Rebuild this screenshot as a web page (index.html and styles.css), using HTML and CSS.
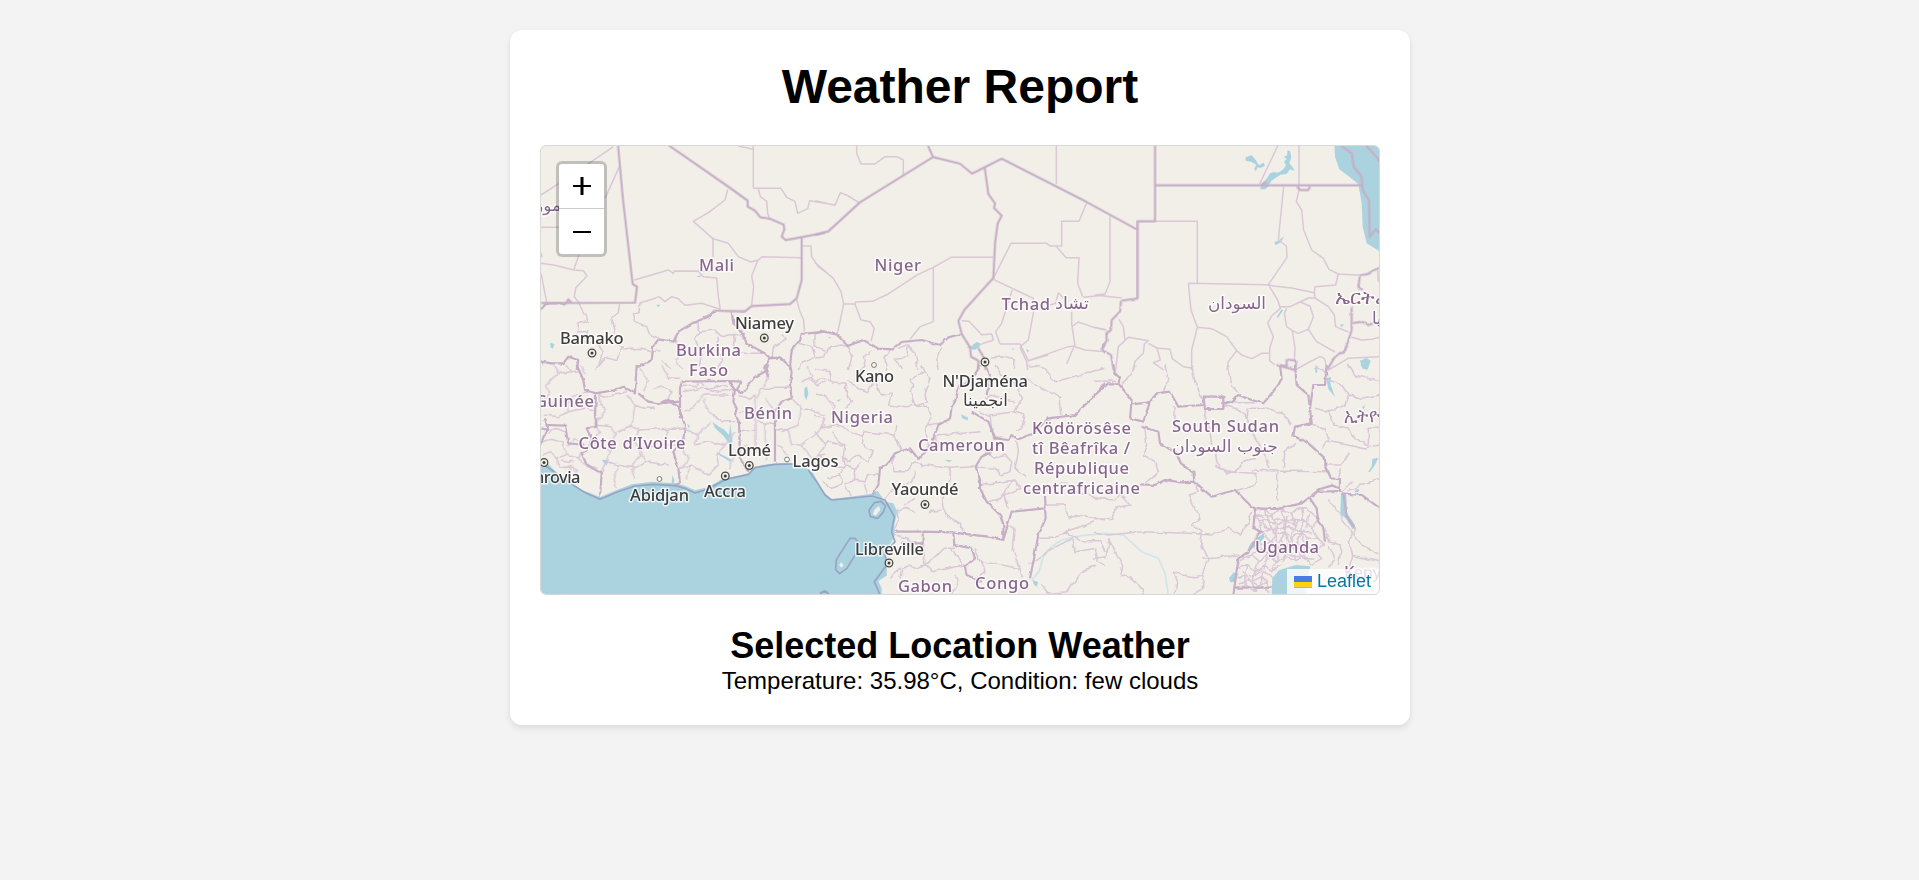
FILE: index.html
```html
<!DOCTYPE html>
<html lang="en">
<head>
<meta charset="utf-8">
<title>Weather Report</title>
<link rel="stylesheet" href="styles.css">
</head>
<body>
<main class="card">
  <h1 class="title">Weather Report</h1>
  <div class="map">
    <svg class="map-canvas" viewBox="541 146 838 448" width="838" height="448">
      <defs>
        <filter id="wiggle" x="0" y="0" width="100%" height="100%">
          <feTurbulence type="fractalNoise" baseFrequency="0.11" numOctaves="2" seed="4"/>
          <feDisplacementMap in="SourceGraphic" scale="5" xChannelSelector="R" yChannelSelector="G"/>
        </filter>
        <filter id="rough" x="0" y="0" width="100%" height="100%">
          <feTurbulence type="fractalNoise" baseFrequency="0.16" numOctaves="2" seed="9"/>
          <feDisplacementMap in="SourceGraphic" scale="3" xChannelSelector="R" yChannelSelector="G"/>
        </filter>
      </defs>
      <!-- sea and lakes -->
      <g class="water">
        <path transform="translate(535 365) scale(.33333)" d="M15 286L35 292 60 318 95 345 140 374 195 396 245 375 290 358 350 350 420 355 450 362 480 376 520 366 560 343 610 332 640 325 660 305 700 297 760 293 790 300 820 312 835 325 845 345 870 385 888 402 940 396 1010 386 1028 378 1040 395 1050 410 1075 415 1087 440 1078 480 1080 510 1062 545 1050 575 1056 600 1055 632 1030 648 1040 670 1040 700H15Z"/>
        <path transform="translate(1095 140) scale(.33333)" d="M718 10L720 50 733 88 760 108 790 132 800 190 803 260 815 310 855 335V10Z"/>
        <g transform="translate(1095 140) scale(.33333)">
          <path d="M452 52l18-6 12 14 10 16 14-8 4 10-14 6-8-2-6 12-4-8 6-12-14-8-18-4z"/>
          <path d="M495 148l6-18 14-14 10-16 12-4 10 2 10-4 8-6 8-12-6-10 8-8-8-8 10-4 0-14 8 0 4 18-6 20 10 12 6 10-14-4-10 14-18 2-12 8-16 10-10 18-8 8z"/>
          <path d="M538 306l12-4 18-14-10 18-16 10zM795 662l20-8 12 8-8 24h-16zM545 530l15-22 4 4-16 22zM738 520l-6 20zM736 552l12 2-10 8zM656 686l8-6 4 8z"/>
        </g>
        <g transform="translate(815 140) scale(.33333)"><path d="M454 622l16-4 14-12 12 4-4 14-16 6-8-4zM634 626l8 6-4 6zM590 626l8-2-4 6zM40 590l8 2-4 4z"/></g>
        <g transform="translate(535 140) scale(.33333)"><path d="M46 608l12 4-4 14-8-4zM364 494h12l-6 8zM484 410l14-4-2 6z"/></g>
        <g transform="translate(535 365) scale(.33333)"><path d="M532 170l18 14 18 10 14 16 4-34 6 50-1 24-12-18-14-20-18-16-8-8zM546 262l24 12 20 10-4 6-38-22zM808 70l8-6 4 22-6 20-6-14zM200 284l22 2-8 16zM456 176l8 6-2 10zM412 330l6 14-2 16-6-4z"/></g>
        <g transform="translate(815 365) scale(.33333)"><path d="M438 148l22 10-2 8-16-6zM64 106l14-4-6 8zM328 64l6 16-4 4zM388 284l24 2-10 6zM316 292l10 10-6 6zM730 94l12 2-6 4zM652 644l18 8-6 14-8-10z"/></g>
        <g transform="translate(1095 365) scale(.33333)"><path d="M738 384h16l2 60 24 36-6 14-22-34-16-14zM456 558l10-22 40-32 2 14-24 26-22 12zM402 640l14-18 14 4-10 24-14 2zM530 690l2-50 20-24 50-16 44 4-12 44v50zM784 372l10 2-4 8h-12zM820 320l10-16 2-22 18-4-10 22-16 22zM660 8l8 10-6 8zM694 40l14-4-2 20 14 40-20-24zM796-4h26l-6 20-14-8zM802 126l8-6-4 14z"/></g>
      </g>
      <g class="river">
        <path transform="translate(815 365) scale(.33333)" d="M650 645L672 620 685 575 710 545 740 525 800 512 870 505 925 510 980 560 1030 580 1050 625 1060 688"/>
      </g>

      <!-- regional borders, desert north -->
      <g class="region">
        <path transform="translate(535 140) scale(.33333)" d="M18 165L72 130 140 85 235 20M252 82L210 175M18 262H72M132 345L116 390 60 376 18 370M116 390L145 392 156 408 122 444 118 470 132 488M18 400L36 490M18 340L22 352M655 18V145M610 18L655 28M655 145H738L755 172 780 184 788 220 818 206 824 182 870 190M670 147L676 170 695 184 698 220 705 240M578 148L570 180 520 218 475 244 534 296 580 310 610 350 648 366 670 360 682 350 798 353M534 296V352M298 420L400 390 415 400 418 393 530 394M490 394L505 410 545 414 550 470 556 508M668 362L650 408 656 440 650 495M315 488L345 480 372 470 390 485 410 470 430 476 450 496 500 490 556 508M802 318H828L830 350 850 380 870 395M785 480L795 515 806 540 808 575"/>
        <path transform="translate(815 140) scale(.33333)" d="M125 18V40L138 72 180 72 210 50H245L265 60V106M0 182L60 196 76 158 100 168 132 188M724 18V133M815 188L792 244H740V318L705 318 695 310H588L535 415M725 320L753 353H792L788 430 803 470M535 352H408L355 382 308 404 220 462 172 484 122 486 120 492H86L78 455 55 415 0 368M355 382V545L315 560 285 598M86 492L72 560 66 582M120 492L138 540 165 545 178 566 168 604M535 418L655 475 656 515 640 600 615 620M592 450L585 470 560 550 542 575 555 612M440 542L462 544 500 584 530 582 535 600 505 610 490 616M556 612H615L640 662 760 620 780 618 770 550V515M770 560L790 546 830 560 870 570M705 495L722 490 730 458 752 480M805 472L870 465M615 622L635 665 638 690M780 620L810 630 870 635M640 662L700 645M755 672L776 622"/>
        <path transform="translate(1095 140) scale(.33333)" d="M45 228V425L30 462 0 465 80 474M182 244H307V428M280 430L520 434 576 352 574 318 550 300 566 140M280 430L288 510 307 562 290 630V690M307 562L350 566 395 590 425 632 400 665 396 690M425 632L440 645 470 656 500 640 522 640M548 18L494 132M612 18V134M604 140L612 150 604 185 620 210 626 270 650 330 685 355 702 388 730 402 795 406M730 402L722 435 660 440 658 458 590 444 535 438 520 434 548 480 556 505 530 528 518 550 535 590 524 625V662L540 675M556 500L585 500 615 486 640 474 660 474 658 458M615 486L645 498 655 530 640 568 610 580 592 572 575 560 568 520 575 505M640 568L665 605 720 636M660 474L700 500 718 525 722 560 760 576M592 572L600 625 598 660M795 450L790 432M0 562L35 570M72 538L85 560 90 600M62 690L70 620 100 592 160 602 148 612 145 640 120 664 114 690M160 610L186 624 196 660 175 668 206 690M186 624L225 628 232 656 265 680 290 684M770 592L800 600 830 598 855 592M600 690L640 668 675 650 688 655 696 685M700 690L760 655 855 650M848 388L850 425"/>
      </g>

      <!-- regional borders, dense south -->
      <g class="region" filter="url(#wiggle)">
        <path transform="translate(535 140) scale(.33333)" d="M130 490L148 520 160 545 130 550 128 575 155 575 145 600 190 610 205 640 186 690M255 492L248 520 230 535 240 570 235 600 262 625 248 660 215 650 190 680M315 488L312 515 292 525 300 545 335 560 345 585 375 600M265 630L310 625 350 635 375 632M420 600L440 630 425 660 440 690M485 545L495 575 480 600 500 640 490 690M495 575L540 570 560 590 600 580 630 600M550 590L540 620 560 650 550 690M600 580L595 620 620 640 690 640M380 660L410 690M740 580L750 600 715 620 712 650M790 610L830 620 840 650 800 670 790 690M840 580V620L870 630"/>
        <path transform="translate(815 140) scale(.33333)" d="M0 655L30 650 35 625 80 615 98 620M98 620L110 650 100 690M168 628L165 640 145 650 150 680 130 690M250 625L280 615 275 650 240 655 260 690M380 620L368 660 372 690M225 630L210 655 215 690M280 615L300 640 310 690M530 655L560 650 600 660 598 690"/>
        <path transform="translate(535 365) scale(.33333)" d="M55 0L70 25 30 60 45 80 22 110M70 25L130 18M135 0L150 30M95 0L110 20M30 150L70 155 100 140 150 130 180 140M100 140L95 110 130 90 165 80M180 85L215 95 275 80M190 80L195 120 215 130 180 180 230 185 240 205 290 180 310 195 400 190 450 190M275 90L300 120 330 130 360 130M300 120L290 180M310 195L300 230 320 270 290 300 300 340M180 180L190 205 170 230 225 260 215 290 250 300 300 310 330 290 400 300M225 260L240 205M215 290L200 325M330 290L320 250 385 240 420 240M400 190L385 240M250 300L235 340 245 370M315 10L340 50 325 80M380 0L400 40 435 40M355 70L380 60 410 80 400 110M445 80L500 70 560 80 590 70M450 140L470 130 510 90 580 90M510 100L520 140 560 170 600 170M455 190L490 210 530 170M490 210L480 240 520 230 570 240 600 200M445 250L460 280 440 310 470 300 520 330 550 300 545 270 570 240M470 300L450 340M610 260L580 310M440 60L480 65 490 50 520 70 580 60M610 90L640 100 660 90V270M615 140L660 130M615 200L660 195M690 0L700 40 680 70 665 100M680 70H770M690 100L720 140M665 170L720 180M690 170L692 290M610 250L640 240M720 190L760 195 770 240 800 240 840 210 870 180M770 100L800 130 850 140 870 150M800 50L830 40 850 60 870 50M800 130L790 180 740 200M800 240L830 280 870 270M730 240L760 270M820 0L830 40M20 230L50 220 80 230 95 270 60 280 50 260 20 270M95 270L130 280 150 300 190 310M60 280L80 310 110 300 130 340M40 205L60 190 95 200M100 240L120 220 150 240M130 280L140 260M110 300L100 340M75 285L115 290"/>
        <path transform="translate(815 365) scale(.33333)" d="M0 50L30 40 50 50 45 20 0 10M50 50L90 55 95 90 110 110 90 130M100 50L130 70 160 80 175 50 200 90 230 85 220 120 275 125 300 120 285 80 300 60 285 40 330 20 320 0M330 20L345 40 330 90 335 110 300 120 340 125 350 160 330 190 340 240M0 90L30 95 60 120 50 150M0 150L30 160 20 190 60 180 110 200 140 215 150 200 240 210 245 180M140 215L150 250 175 260 160 290 130 270 100 290 85 270 90 240 70 230 50 200M0 200L30 240 40 230 80 240M30 240L10 270 30 290 20 310M85 270L90 300 75 330 80 360 50 370 20 350M90 300L120 310 140 290M120 310L115 345 90 360 105 390M115 345L150 350 160 330 190 330M150 350L160 385M75 330L40 340M60 310H90M240 210L260 260M240 270L230 290 240 320 275 320 300 290 330 300 400 310 480 305M400 310L410 340 380 400 385 430 395 455 440 475V500M300 320L290 350 250 370 225 380 210 400M240 440L280 430 300 440M340 440L380 435M245 430L250 460 240 490M270 420L300 400M370 240L360 210 440 205 500 200M340 180L400 170M480 305L540 310 560 330 585 320 590 290 570 270 540 280 510 260M500 360L600 345 615 370 570 390 580 430M600 345L590 350 560 400 520 410M540 220L530 190 525 150 600 140 630 150 620 190 600 200M525 155L490 140M540 0L560 30 600 50 620 100 600 140M600 50L640 40 660 60 700 80 735 95 740 150M640 0L690 10 720 50 870 10M510 100L530 90 600 110M540 220L560 215M605 225L610 260 600 310 630 340M690 420L750 420 760 460 790 450 870 465M640 380H690L750 350 800 390 870 400M585 480L600 490 595 560 610 600 620 640M670 520L720 520 750 500 840 470M750 500L800 530 860 530 870 560M640 600L700 560 770 520 780 560 840 550 850 590 870 600M840 600L790 630 760 680 700 685 680 660M240 510L280 520 290 560 325 570M325 530L330 600 300 610 280 600 250 610 230 640M330 600L355 580 385 550 420 550M330 600L350 620 450 600M410 550L440 600M260 610L255 640M420 630L430 650 410 690M480 550L500 590 560 600 610 610M500 590L510 620 480 640M240 560L210 570"/>
        <path transform="translate(1095 365) scale(.33333)" d="M0 50L30 45 60 50M80 55L110 30 120 0M210 0L220 50 205 80M290 0L300 50 325 110M400 0L410 60 430 85M240 125V190M330 135L345 200 350 240M380 120L420 130 450 150 470 200 500 250 525 312M455 170L460 130 520 130 570 150 590 180M360 250L365 290 395 325 420 320 440 290 480 280M385 125L400 110 480 110M360 300L400 320 480 325 488 350 470 365 425 375M470 315L545 318 700 320M545 318V410M600 235L570 260 565 310M700 320L700 335M150 190L155 240 145 270 180 290 190 320 150 355M0 400L60 405 70 385 105 420 60 430 50 460 0 465M300 355L310 380 280 390 300 430 315 460 290 480 320 500 315 530 340 580M0 505L40 510 140 500 280 505 350 510 400 490 440 510 470 440M320 580L430 570M0 580L30 575 45 540 40 520 60 560 80 600 75 630 110 640 140 670 150 690M340 580L320 630 330 660 300 690M235 620L260 630 300 635 320 630M235 620L245 650 240 690M660 130L700 140 720 180 760 190M690 40L740 60 760 90 800 100 855 90M760 90L750 120 700 140M650 180L690 190 700 220 680 250M700 230L760 240 800 250 855 240M760 190L780 220 820 240V190L855 190M760 260L740 300 690 300M740 310L730 340M760 380L800 360 855 340M740 380L770 350M700 400L770 500 800 540 855 570M780 490L760 530 770 570 855 590M690 490L700 530 740 540 730 600M770 570L760 610M660 0L700 30M760 0L780 30 855 50M700 540L720 580 700 610"/>
        <!-- fine district mesh -->
        <path transform="translate(1095 365) scale(.33333)" d="M480 440L510 430 530 450 560 430 590 450 620 425 645 440 670 460 650 490 670 520 685 540 660 560 680 580 650 600M490 470L520 465 545 480 570 465 600 480 625 460 650 490M500 500L530 490 540 510 570 500 590 520 620 500 640 520 670 520M480 440L490 470 500 500 480 520 500 540 530 530 550 550 580 535 600 555 630 540 660 560M510 430L520 465 530 490 500 500 530 530 540 510 550 550 570 500 580 535 590 520 600 555 620 500 630 540 640 520M530 450L545 480 540 510M560 430L570 465 570 500M590 450L600 480 590 520M620 425L625 460 620 500M440 580L470 570 490 590 520 570 545 590 570 570 600 590 630 570 650 600M430 610L460 600 480 620 510 600 530 620 560 600M425 640L450 630 470 650 500 635 520 660M420 670L450 660 480 680 500 660 520 680M470 570L500 540M490 590L480 620 470 650 480 680M520 570L530 530M520 570L510 600 500 635 500 660M545 590L550 550M570 570L580 535M600 590L600 555M630 570L630 540M460 600L450 630 450 660M440 580L430 610M545 590L530 620M575 450V490L560 520 575 560 560 590M505 450L500 480M640 450L635 490M610 520L615 570 640 590M480 455L510 450 550 465 590 465 640 470M500 480L540 495 580 485 610 495 650 505M480 550L510 555 530 580 560 560 610 575 660 580M440 620L470 635 500 615 530 640M430 655L460 645 490 665 520 650"/>
      </g>

      <!-- national borders -->
      <g class="nation">
        <path transform="translate(535 140) scale(.33333)" d="M249 15L264 180 293 432 306 440 300 488 18 489M94 488L100 478 110 488M400 15L580 140 638 182V200L660 212 676 232 705 236 746 254 748 268 740 290 752 300 798 292 870 278M800 292V420L785 475 765 492 650 498 630 514 540 512"/>
        <path transform="translate(815 140) scale(.33333)" d="M338 15L354 51 135 187 40 274 0 285M354 51L435 71 471 101 560 56 815 186 965 268M509 82L520 162 540 190 537 204 560 227 548 250 540 310 535 414 448 510 430 543 440 582 465 622 468 650 490 662V690M490 625L505 650 512 690"/>
        <path transform="translate(1095 140) scale(.33333)" d="M180 15V244H128V475M180 136H800M608 140L616 150H640L645 140M740 18L770 40 776 80 800 110 803 150 822 180 824 290 842 268 855 280M812 15L835 40 855 65M500 134L514 126"/>
      </g>
      <g class="nation" filter="url(#rough)">
        <path transform="translate(535 140) scale(.33333)" d="M18 508L35 490H95M540 510L520 530 475 548 430 575 415 605 370 598 355 620 350 660 325 675 305 680M590 515L595 550 620 575 635 610 690 640 705 655 690 680 700 710M705 655L735 652 765 680 770 630 795 600 800 582 870 575M18 665L50 670 85 670 100 650 130 660 125 690"/>
        <path transform="translate(815 140) scale(.33333)" d="M0 580L25 574 66 584 98 618 145 600 190 626 235 628 260 606 320 600 375 615 400 592 438 582M870 610L860 630 870 640"/>
        <path transform="translate(1095 140) scale(.33333)" d="M130 475L78 482 75 515 50 540 48 570 34 580 35 600 20 630 48 645 56 690M855 380L820 402 795 406 790 440 800 450M770 500V570L750 632 720 650 696 690M770 550L800 545 820 555 855 545M545 675L575 678V658L605 662 600 690M600 690L545 675"/>
        <path transform="translate(535 365) scale(.33333)" d="M125 0L145 45 150 75 182 85 240 75 265 65 300 85 305 0M310 85L340 110 370 115 400 105 430 125 450 180 445 225 415 260 430 310 435 355 420 360M370 115L435 110M435 160V70L440 50 580 48 600 75 595 110 605 130 600 150 612 170 615 280 640 320M580 48L620 50M625 80L660 35 690 20 700 0M620 50L605 75 625 85M720 290V140L740 110 770 100 765 60 770 20 765 0M183 85L180 150 185 185 155 190 170 225 155 260 140 265 155 300 200 325 195 395M18 235L40 180 90 182 100 235 150 240M20 190L40 195 30 160"/>
        <path transform="translate(815 365) scale(.33333)" d="M495 0L480 30 430 70 420 110 410 125 405 160 370 180 350 235 310 282 285 250 240 265 215 300 195 310 190 360 172 390M510 0L525 30 515 90M470 140L520 170 540 220 580 225 590 210 605 225 655 205M655 205L700 160 780 150 830 100 870 55M530 260L500 275 482 305 495 345 495 370 515 410 555 450 565 480 565 525 520 515 410 502 320 500 240 500M323 500V535H260M415 502L418 540 470 550 480 580 450 605 455 630 500 650M565 525L590 440 690 430 692 460 670 510 655 590 645 640M692 430L690 390"/>
        <path transform="translate(1095 365) scale(.33333)" d="M55 0L60 25 75 40 70 55 40 55 0 90M70 55L110 105 105 160 145 170 165 110 185 85 225 80 250 125 325 120M110 118L165 112M325 95H385V132H330ZM385 115L410 110 430 90 470 105 505 115 550 60 560 40 555 0M140 185L190 200 195 235 245 265 260 300 295 320 298 350 260 352 210 345 180 360 135 358M298 350L350 395 420 375 470 425 480 430 545 432 620 415 665 380 740 378M600 0L605 60 640 90 645 130 655 60 690 60 695 0M645 130L650 175 600 185 595 212 640 235 690 280 692 310 710 340 735 342V378M665 375L710 362 735 370M740 385L800 390 855 430M645 400L665 430 670 470 685 490 690 530M480 430L475 490 500 500 460 560 430 580 415 690M415 668H530M745 385L755 455 780 490"/>
      </g>
      <!-- maritime limits -->
      <g class="maritime">
        <path transform="translate(535 365) scale(.33333)" d="M18 292L45 312 100 350 145 380 195 403 245 382 300 363 355 358 420 362 450 370 480 384 520 372 570 344 640 328 660 308 720 298 775 297M820 315L845 350 870 390 890 405 940 400 1010 393 1050 405 1078 455 1070 500 1080 530 1050 565 1055 600 1018 650 1035 690M855 685l15-8 10 10"/>
        <path transform="translate(815 365) scale(.33333)" d="M178 413l20-4 14 14-8 20-16 17-22-5-4-20zM105 520h15l8 10-2 30-30 50-22 16-12-12 2-30zM15 690l8-10 14 2 4 8"/>
      </g>
      <path class="islet" transform="translate(815 365) scale(.33333)" d="M178 434l14-12 4 12-14 18-8-4zM72 600l6-8 8 8-6 8z"/>

      <!-- city markers -->
      <g class="capital">
        <circle cx="592" cy="353" r="3.8"/><circle cx="764.300" cy="338" r="3.8"/><circle cx="985" cy="362" r="3.8"/>
        <circle cx="544" cy="462.500" r="3.8"/><circle cx="725.300" cy="476" r="3.8"/><circle cx="749.300" cy="465.500" r="3.8"/>
        <circle cx="925" cy="504.500" r="3.8"/><circle cx="889" cy="563" r="3.8"/>
      </g>
      <g class="capital-dot">
        <circle cx="592" cy="353" r="1.5"/><circle cx="764.300" cy="338" r="1.5"/><circle cx="985" cy="362" r="1.5"/>
        <circle cx="544" cy="462.500" r="1.5"/><circle cx="725.300" cy="476" r="1.5"/><circle cx="749.300" cy="465.500" r="1.5"/>
        <circle cx="925" cy="504.500" r="1.5"/><circle cx="889" cy="563" r="1.5"/>
      </g>
      <g class="town"><circle cx="874" cy="365" r="2.400"/><circle cx="659.500" cy="479" r="2.400"/><circle cx="787" cy="459.500" r="2.400"/></g>

      <g class="label country">
        <text x="699" y="271" textLength="35">Mali</text>
        <text x="874.500" y="271" textLength="46.500">Niger</text>
        <text x="1001.500" y="310" textLength="48.500">Tchad</text>
        <text class="arabic" x="1055" y="309" textLength="34" lengthAdjust="spacingAndGlyphs">تشاد</text>
        <text class="arabic" x="1208" y="309" textLength="58" lengthAdjust="spacingAndGlyphs">السودان</text>
        <text class="ethiopic" x="1335" y="304" textLength="55" lengthAdjust="spacingAndGlyphs">ኤርትራ</text>
        <text class="arabic" x="1372" y="324">يا</text>
        <text class="arabic" x="535" y="211" textLength="26" lengthAdjust="spacingAndGlyphs">مور</text>
        <text x="676" y="356" textLength="65">Burkina</text>
        <text x="689" y="375.500" textLength="39">Faso</text>
        <text x="535" y="406.500" textLength="59">Guinée</text>
        <text x="744" y="418.500" textLength="48">Bénin</text>
        <text x="578.500" y="449" textLength="107">Côte d’Ivoire</text>
        <text x="831" y="423" textLength="62">Nigeria</text>
        <text x="918" y="450.500" textLength="87">Cameroun</text>
        <text x="1032" y="433.500" textLength="99">Ködörösêse</text>
        <text x="1032" y="453.500" textLength="98">tî Bêafrîka /</text>
        <text x="1034" y="473.500" textLength="95">République</text>
        <text x="1023" y="493.500" textLength="117">centrafricaine</text>
        <text x="1172" y="432" textLength="107">South Sudan</text>
        <text class="arabic" x="1172" y="452" textLength="106" lengthAdjust="spacingAndGlyphs">جنوب السودان</text>
        <text class="ethiopic" x="1344" y="422" textLength="58" lengthAdjust="spacingAndGlyphs">ኢትዮጵያ</text>
        <text x="1255" y="553" textLength="64">Uganda</text>
        <text x="898" y="592" textLength="54">Gabon</text>
        <text x="975" y="589" textLength="54">Congo</text>
        <text x="1344" y="578" textLength="46">Kenya</text>
      </g>
      <g class="label city">
        <text x="560" y="343.500" textLength="63.500">Bamako</text>
        <text x="735" y="328.500" textLength="59">Niamey</text>
        <text x="855" y="381.500" textLength="39">Kano</text>
        <text x="942.500" y="386.500" textLength="85.500">N'Djaména</text>
        <text class="arabic" x="963" y="406" textLength="45" lengthAdjust="spacingAndGlyphs">انجمينا</text>
        <text x="728" y="456" textLength="43">Lomé</text>
        <text x="792.500" y="466.500" textLength="46">Lagos</text>
        <text x="704" y="496.500" textLength="42">Accra</text>
        <text x="630" y="501" textLength="59">Abidjan</text>
        <text x="510" y="483" textLength="70.500">Monrovia</text>
        <text x="891.500" y="495" textLength="67">Yaoundé</text>
        <text x="855" y="554.500" textLength="69">Libreville</text>
      </g>
    </svg>
    <div class="zoom-control">
      <button class="zoom-button" aria-label="Zoom in"><svg width="18" height="18" viewBox="0 0 18 18"><path d="M0 8h18v2H0zM7.500 0h3v18h-3z"/></svg></button>
      <button class="zoom-button" aria-label="Zoom out"><svg width="18" height="18" viewBox="0 0 18 18"><path d="M0 8h18v2H0z"/></svg></button>
    </div>
    <div class="attribution">
      <svg class="flag" width="18" height="12" viewBox="0 0 12 8"><path fill="#4C7BE1" d="M0 0h12v4H0z"/><path fill="#FFD500" d="M0 4h12v3H0z"/><path fill="#E0BC00" d="M0 7h12v1H0z"/></svg>
      <a class="attribution-link">Leaflet</a>
    </div>
  </div>
  <section class="report">
    <h2 class="subtitle">Selected Location Weather</h2>
    <p class="summary">Temperature: 35.98°C, Condition: few clouds</p>
  </section>
</main>
</body>
</html>
```
FILE: styles.css
```css
* { box-sizing: border-box; margin: 0; }
html { background: #f3f3f3; }
body {
  min-height: 880px;
  padding: 30px 0 0 1px;
  color: #000;
  font-family: "Liberation Sans", Arial, sans-serif;
  text-align: center;
}
.card {
  width: 900px;
  height: 695px;
  margin: 0 auto;
  padding: 30px;
  border-radius: 12px;
  background: #fff;
  box-shadow: 0 3px 6px rgba(0, 0, 0, .1);
}
.title { font-size: 48px; line-height: 53px; margin-bottom: 32px; }
.map {
  position: relative;
  height: 450px;
  border: 1px solid #d8d8d8;
  border-radius: 6px;
  background: #f2efe9;
  overflow: hidden;
}
.map-canvas { display: block; }
.water { fill: #aad3df; }
.river, .region, .nation, .maritime { fill: none; stroke-linejoin: round; }
.river { stroke: #cfe5ea; stroke-width: 5; }
.region { stroke: #dac8d7; stroke-width: 4.5; }
.nation { stroke: #c6aec6; stroke-width: 6.5; }
.maritime { stroke: #98a4c4; stroke-width: 5; }
.islet { fill: #f2efe9; }
.capital { fill: #f2efe9; stroke: #4b4a43; stroke-width: 1.3; }
.capital-dot { fill: #3d3c37; }
.town { fill: #fff; stroke: #77766f; stroke-width: 1; }
.label {
  font-family: "Noto Sans", "DejaVu Sans", sans-serif;
  font-size: 16.5px;
  font-weight: 500;
  stroke: rgba(255, 255, 255, .75);
  stroke-width: 3px;
  stroke-linejoin: round;
  paint-order: stroke;
}
.country { fill: #87658c; }
.city { fill: #3d3d3d; }
.arabic { font-family: "DejaVu Sans", sans-serif; }
.ethiopic { font-size: 19px; }
.zoom-control {
  position: absolute;
  top: 15px;
  left: 15px;
  display: flex;
  flex-direction: column;
  width: 51px;
  border: 3px solid rgba(0, 0, 0, .2);
  border-radius: 6px;
  background: #fff;
  background-clip: padding-box;
}
.zoom-button {
  display: grid;
  place-items: center;
  height: 45px;
  padding: 0 0 0 1px;
  border: 0;
  background: none;
}
.zoom-button:first-child { border-bottom: 1px solid #ccc; }
.attribution {
  position: absolute;
  right: 0;
  bottom: 0;
  display: flex;
  align-items: center;
  gap: 5px;
  height: 25px;
  padding: 0 8px 0 7px;
  background: rgba(255, 255, 255, .8);
  font-size: 18px;
}
.attribution-link { color: #0078a8; }
.report { padding-top: 30px; }
.subtitle { font-size: 36px; line-height: 42px; }
.summary { font-size: 24px; line-height: 28px; }
```
